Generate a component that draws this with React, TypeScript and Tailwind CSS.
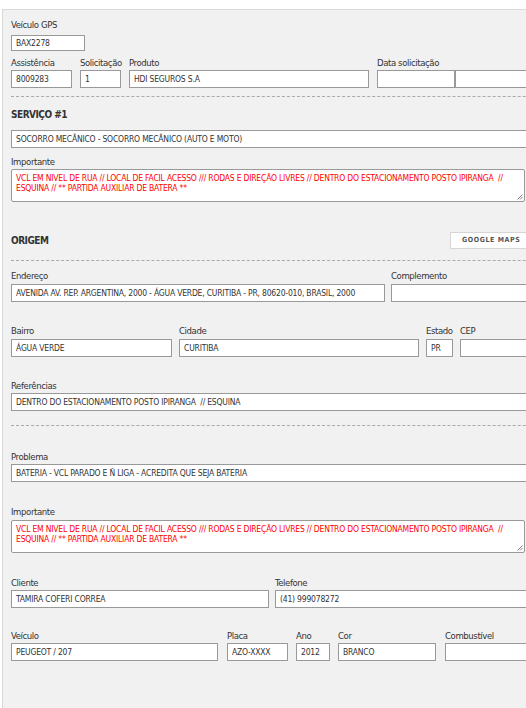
import React from 'react';

const FONT = "font-['DejaVu_Sans_Condensed','Liberation_Sans',sans-serif]";
const LABEL = 'block h-[12px] text-[9.5px] leading-[12px] tracking-[-0.4px] text-[#333] whitespace-nowrap';
const BOX = 'bg-white border border-[#999] pl-[4px] text-[8.5px] tracking-[-0.2px] text-[#333] whitespace-pre overflow-hidden flex items-center';

const NOTE_1 = 'VCL EM NIVEL DE RUA // LOCAL DE FACIL ACESSO /// RODAS E DIREÇÃO LIVRES // DENTRO DO ESTACIONAMENTO POSTO IPIRANGA  //';
const NOTE_2 = 'ESQUINA // ** PARTIDA AUXILIAR DE BATERA **';

function Field({
  label,
  value = '',
  w,
  h = 18,
  gap = 1,
}: {
  label?: string;
  value?: string;
  w: string;
  h?: number;
  gap?: number;
}) {
  return (
    <div className={`flex flex-col shrink-0 ${w}`}>
      <span className={LABEL}>{label ?? '\u00a0'}</span>
      <div className={`${BOX} w-full`} style={{ height: h, marginTop: gap }}>
        {value}
      </div>
    </div>
  );
}

function Note() {
  return (
    <div className="relative w-[514px] h-[33px] bg-white border border-[#999] rounded-[2px] pl-[4px] pt-[3px] text-[8.5px] leading-[10px] tracking-[-0.2px] text-[#ff0000] whitespace-pre overflow-hidden">
      <div>{NOTE_1}</div>
      <div>{NOTE_2}</div>
      {/* resize grip */}
      <svg className="absolute right-[1px] bottom-[1px]" width="6" height="6" viewBox="0 0 6 6">
        <line x1="0.5" y1="5.5" x2="5.5" y2="0.5" stroke="#666" strokeWidth="0.8" />
        <line x1="3" y1="5.5" x2="5.5" y2="3" stroke="#666" strokeWidth="0.8" />
      </svg>
    </div>
  );
}

function Dashed({ mt }: { mt: string }) {
  return <div className={`${mt} w-[600px] border-t border-dashed border-[#aaa]`} />;
}

export default function App() {
  return (
    <div className={`w-[526px] h-[708px] overflow-hidden bg-white ${FONT}`}>
      <div className="mt-[9px] ml-[2px] w-[640px] h-[699px] border-t border-l border-[#d9d9d9] bg-[#f1f1f1] pl-[8px] pt-[9px]">
        {/* Veículo GPS */}
        <Field label="Veículo GPS" value="BAX2278" w="w-[74px]" h={16} gap={4} />

        {/* Assistência row */}
        <div className="mt-[6px] flex gap-[8px]">
          <Field label="Assistência" value="8009283" w="w-[61px]" />
          <Field label="Solicitação" value="1" w="w-[41px]" />
          <Field label="Produto" value="HDI SEGUROS S.A" w="w-[240px]" />
          <div className="flex">
            <Field label="Data solicitação" w="w-[78px]" />
            <Field w="w-[90px]" />
          </div>
        </div>

        <Dashed mt="mt-[8px]" />

        {/* Serviço */}
        <div className="mt-[11px] h-[13px] text-[10px] leading-[13px] tracking-[-0.5px] font-bold text-[#333]">SERVIÇO #1</div>
        <div className={`${BOX} mt-[9px] w-[560px] h-[18px]`}>SOCORRO MECÂNICO - SOCORRO MECÂNICO (AUTO E MOTO)</div>
        <span className={`${LABEL} mt-[8px]`}>Importante</span>
        <div className="mt-[1px]">
          <Note />
        </div>

        {/* Origem */}
        <div className="mt-[30px] h-[17px] flex items-center">
          <span className="w-[439px] text-[10px] tracking-[-0.5px] font-bold text-[#333]">ORIGEM</span>
          <button className="h-[17px] w-[100px] bg-white border border-[#d6d6d6] text-left pl-[11px] text-[7px] font-bold tracking-[0.6px] text-[#555]">
            GOOGLE MAPS
          </button>
        </div>

        <Dashed mt="mt-[11px]" />

        <div className="mt-[9px] flex gap-[6px]">
          <Field label="Endereço" value="AVENIDA AV. REP. ARGENTINA, 2000 - ÁGUA VERDE, CURITIBA - PR, 80620-010, BRASIL, 2000" w="w-[374px]" gap={2} />
          <Field label="Complemento" w="w-[160px]" gap={2} />
        </div>

        <div className="mt-[23px] flex gap-[7px]">
          <Field label="Bairro" value="ÁGUA VERDE" w="w-[161px]" gap={2} />
          <Field label="Cidade" value="CURITIBA" w="w-[240px]" gap={2} />
          <Field label="Estado" value="PR" w="w-[27px]" gap={2} />
          <Field label="CEP" w="w-[100px]" gap={2} />
        </div>

        <div className="mt-[23px]">
          <Field label="Referências" value="DENTRO DO ESTACIONAMENTO POSTO IPIRANGA  // ESQUINA" w="w-[560px]" />
        </div>

        <Dashed mt="mt-[14px]" />

        <div className="mt-[25px]">
          <Field label="Problema" value="BATERIA - VCL PARADO E Ñ LIGA - ACREDITA QUE SEJA BATERIA" w="w-[560px]" />
        </div>

        <span className={`${LABEL} mt-[24px]`}>Importante</span>
        <div className="mt-[2px]">
          <Note />
        </div>

        <div className="mt-[24px] flex gap-[6px]">
          <Field label="Cliente" value="TAMIRA COFERI CORREA" w="w-[258px]" />
          <Field label="Telefone" value="(41) 999078272" w="w-[300px]" />
        </div>

        <div className="mt-[22px] flex">
          <Field label="Veículo" value="PEUGEOT / 207" w="w-[207px]" />
          <div className="ml-[9px]">
            <Field label="Placa" value="AZO-XXXX" w="w-[61px]" />
          </div>
          <div className="ml-[8px]">
            <Field label="Ano" value="2012" w="w-[34px]" />
          </div>
          <div className="ml-[8px]">
            <Field label="Cor" value="BRANCO" w="w-[98px]" />
          </div>
          <div className="ml-[9px]">
            <Field label="Combustível" w="w-[120px]" />
          </div>
        </div>
      </div>
    </div>
  );
}
